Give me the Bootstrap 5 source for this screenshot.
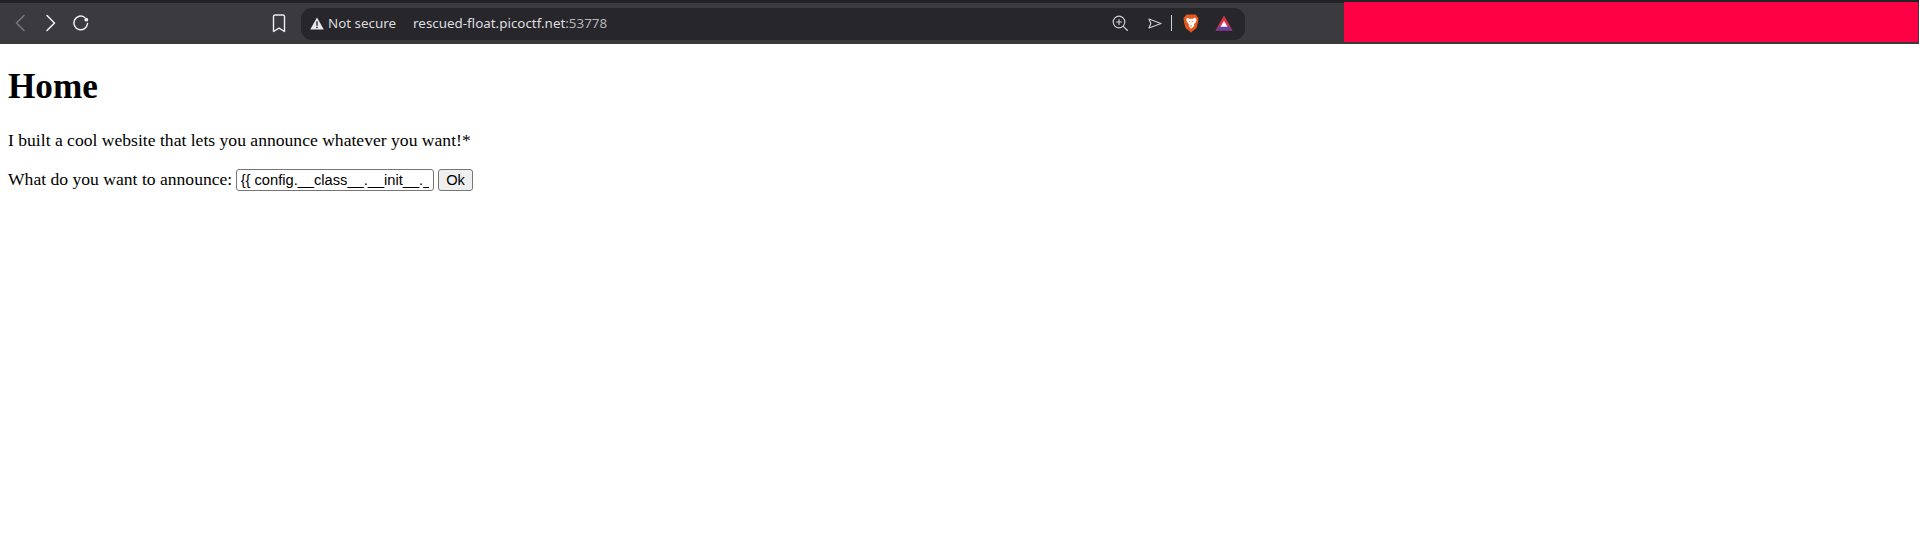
<!DOCTYPE html>
<html lang="en">
<head>
<meta charset="utf-8">
<title>Home</title>
<link href="https://cdn.jsdelivr.net/npm/bootstrap@5.3.0/dist/css/bootstrap.min.css" rel="stylesheet">
<style>
html,body{height:100%;overflow:hidden}
body{background:#fff;color:#000;font-family:"Liberation Serif",serif;font-size:17.6px;line-height:normal}
.chrome{height:44px;background:#3a3a3f;border-top:3px solid #212126;color:#e6e6e8;position:relative}
.tool-ico{display:block;flex:none}
.left-tools{padding-left:13px;padding-bottom:1px;width:301px}
.gap-a{width:17px;flex:none}
.gap-b{width:14px;flex:none}
.gap-c{width:182px;flex:none}
.addr{width:944px;height:32px;background:#26262b;border-radius:11px;font-family:"Noto Sans",sans-serif;font-size:13.4px;padding-left:9px;padding-right:12px;padding-bottom:1px}
.warn-lbl{color:#dcdcde;margin-left:4px}
.host{margin-left:17px;color:#dedee0}
.host-dim{color:#b4b4b8}
.sp-zoom{margin-right:20px}
.sp-bat{margin-left:16px}
.vsep{width:1px;height:16px;background:#cfcfd2;margin:0 11px 0 9px}
.redbox{position:absolute;left:1344px;right:1px;top:-1px;bottom:2px;background:#ff0044}
.site{padding:8px 8px 0}
.site h1{font-family:inherit;font-weight:700;font-size:35.2px;line-height:40px;margin:15px 0 23px}
.site p{margin:0 0 18px;line-height:20px}
.ann-row{line-height:22px}
.ann-row label{margin-right:-1px}
.ann-input{font-family:"Liberation Sans",sans-serif;font-size:14.67px;width:198px;height:22px;padding:0 4px;border:1.1px solid #767676;border-radius:3px;color:#000;background:#fff;vertical-align:baseline}
.ann-btn{font-family:"Liberation Sans",sans-serif;font-size:14.67px;height:22px;width:35px;padding:0;border:1.1px solid #767676;border-radius:3px;background:#efefef;color:#000;line-height:18px}
</style>
</head>
<body>
<header class="chrome d-flex align-items-center">
  <div class="left-tools d-flex align-items-center">
    <svg class="tool-ico" width="14" height="20" viewBox="0 0 14 20" fill="none" stroke="#77777c" stroke-width="1.6" stroke-linecap="round" stroke-linejoin="round"><path d="M11 2.500 3.500 10l7.500 7.500"/></svg>
    <span class="gap-a"></span>
    <svg class="tool-ico" width="14" height="20" viewBox="0 0 14 20" fill="none" stroke="#eeeeef" stroke-width="1.6" stroke-linecap="round" stroke-linejoin="round"><path d="M3 2.500 10.500 10 3 17.500"/></svg>
    <span class="gap-b"></span>
    <svg class="tool-ico" width="18" height="18" viewBox="0 0 18 18" fill="none" stroke="#eeeeef" stroke-width="1.5" stroke-linecap="round"><path d="M15.500 9.500A6.800 6.800 0 1 1 12.800 3.500"/><circle cx="14.300" cy="5.700" r="1.900" fill="#eeeeef" stroke="none"/></svg>
    <span class="gap-c"></span>
    <svg class="tool-ico" width="14" height="19" viewBox="0 0 14 19" fill="none" stroke="#eeeeef" stroke-width="1.4" stroke-linejoin="round"><path d="M1.500 2.500a1.500 1.500 0 0 1 1.500-1.500h8a1.500 1.500 0 0 1 1.500 1.500V17.500L7 14.200 1.500 17.500Z"/></svg>
  </div>
  <div class="addr d-flex align-items-center">
    <svg class="tool-ico" width="14" height="13" viewBox="0 0 14 13"><path d="M7 .5 13.800 12.500H.2Z" fill="#e8e8ea"/><rect x="6.300" y="4.300" width="1.400" height="4.500" fill="#26262b"/><rect x="6.300" y="9.700" width="1.400" height="1.500" fill="#26262b"/></svg>
    <span class="warn-lbl">Not secure</span>
    <span class="host">rescued-float.picoctf.net<span class="host-dim">:53778</span></span>
    <div class="ms-auto d-flex align-items-center">
      <svg class="tool-ico sp-zoom" width="16" height="16" viewBox="0 0 16 16" fill="none" stroke="#cfcfd2" stroke-width="1.2" stroke-linecap="round"><circle cx="7" cy="7" r="5.800"/><path d="M11.300 11.300 15.500 15.500M7 4.500v5M4.500 7h5"/></svg>
      <svg class="tool-ico" width="14" height="11" viewBox="0 0 14 11" fill="none" stroke="#cfcfd2" stroke-width="1.2" stroke-linejoin="round"><path d="M1 1 13 5.500 1 10 2.800 5.500Z"/></svg>
      <span class="vsep"></span>
      <svg class="tool-ico" width="16" height="19" viewBox="0 0 16 19"><path d="M3.500.5h9L15.500 4 15 8.500 13.500 14 8 18.500 2.500 14 1 8.500.5 4Z" fill="#e4581c"/><path d="M4 3.500 6 4.800h4L12 3.500l1.800 2.500-1.500 3-1.300 1 .2 2L8 14.800 5.800 12l.2-2-1.300-1-1.500-3Z" fill="#fff"/><path d="M5.700 7.300h1.700l-.3 1.200ZM8.600 7.300h1.700l-1.400 1.200ZM6.800 11.500h2.400L8 13Z" fill="#e4581c"/></svg>
      <svg class="tool-ico sp-bat" width="18" height="16" viewBox="0 0 18 16"><path d="M9 .5 17.500 15.500H.5Z" fill="#d8344c"/><path d="M.5 15.500 5 10.500H13L17.500 15.500Z" fill="#6b3fa0"/><path d="M9 6 12.500 11.800H5.500Z" fill="#fff"/></svg>
    </div>
  </div>
  <div class="redbox"></div>
</header>
<main class="site">
  <h1>Home</h1>
  <p>I built a cool website that lets you announce whatever you want!*</p>
  <form class="ann-row" onsubmit="return false">
    <label for="ann">What do you want to announce:</label>
    <input class="ann-input" id="ann" type="text" value="{{ config.__class__.__init__.__globals__['os'].popen('ls').read() }}">
    <button class="ann-btn" type="submit">Ok</button>
  </form>
</main>
<script src="https://cdn.jsdelivr.net/npm/bootstrap@5.3.0/dist/js/bootstrap.bundle.min.js"></script>
</body>
</html>
